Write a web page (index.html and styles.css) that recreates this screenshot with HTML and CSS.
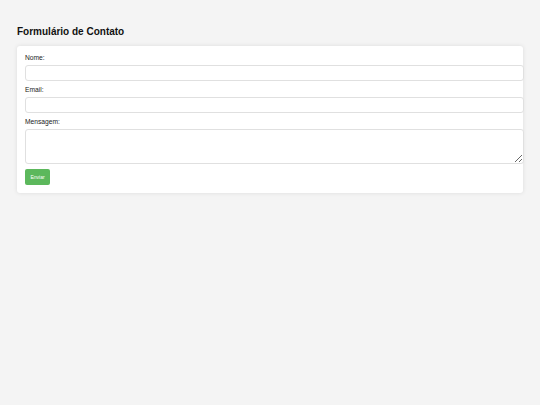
FILE: index.html
```html
<!DOCTYPE html>
<html lang="pt">
<head>
<meta charset="utf-8">
<title>Formulário de Contato</title>
<link rel="stylesheet" href="styles.css">
</head>
<body>
  <h2 class="title">Formulário de Contato</h2>
  <form class="card">
    <label class="label" for="nome">Nome:</label>
    <input class="field" type="text" id="nome">
    <label class="label" for="email">Email:</label>
    <input class="field" type="email" id="email">
    <label class="label" for="msg">Mensagem:</label>
    <textarea class="field area" id="msg"></textarea>
    <button class="btn" type="submit">Enviar</button>
  </form>
</body>
</html>
```

FILE: styles.css
```css
html, body {
  margin: 0;
  background: #f4f4f4;
}
body {
  padding: 16px 17px;
  font-family: "Liberation Sans", Arial, sans-serif;
  color: #111;
}
.title {
  font-size: 10px;
  font-weight: bold;
  line-height: 12px;
  margin: 10px 0 8px;
}
.card {
  background: #fff;
  padding: 8px;
  border-radius: 3px;
  box-shadow: 0 0 4px rgba(0, 0, 0, 0.1);
  display: flex;
  flex-direction: column;
  align-items: flex-start;
}
.label {
  font-size: 6.7px;
  line-height: 8px;
  margin-bottom: 3px;
  color: #222;
}
.field {
  width: 100%;
  height: 6px;
  padding: 4px 3.5px;
  border: 1px solid #e0e0e0;
  border-radius: 3px;
  font-size: 7px;
  margin: 0 0 5px;
  background: #fff;
}
.area {
  height: 25px;
  resize: vertical;
}
.btn {
  background: #5cb85c;
  color: #fff;
  border: none;
  border-radius: 2px;
  font-size: 5px;
  font-family: "Liberation Sans", Arial, sans-serif;
  height: 16px;
  width: 25px;
  padding: 0;
}
```
